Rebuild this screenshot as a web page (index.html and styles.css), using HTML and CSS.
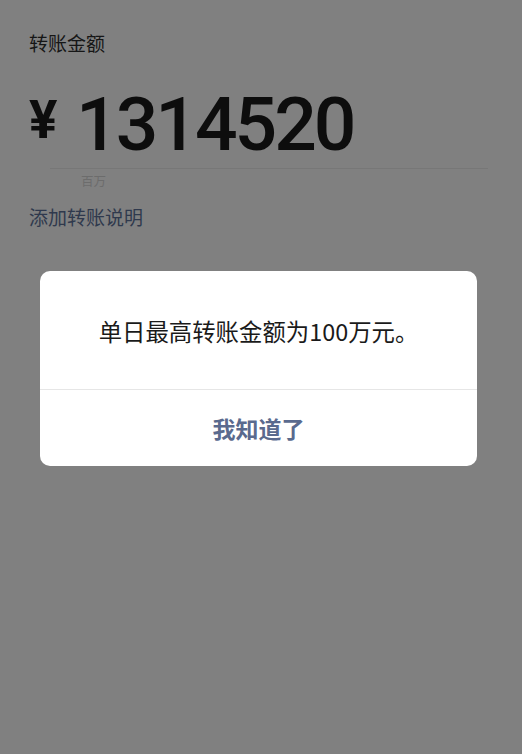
FILE: index.html
```html
<!DOCTYPE html>
<html lang="zh-CN">
<head>
<meta charset="utf-8">
<link rel="stylesheet" href="styles.css">
</head>
<body>
<div class="page">
  <div class="label">转账金额</div>
  <div class="amount-row">
    <span class="yen">¥</span>
    <span class="amount">1314520</span>
  </div>
  <div class="underline"></div>
  <div class="unit">百万</div>
  <div class="note">添加转账说明</div>
</div>
<div class="dialog">
  <div class="dialog-msg">单日最高转账金额为100万元。</div>
  <div class="dialog-btn">我知道了</div>
</div>
</body>
</html>
```
FILE: styles.css
```css
html, body {
  margin: 0;
  padding: 0;
}
body {
  width: 522px;
  height: 754px;
  background: #808080;
  font-family: "Noto Sans CJK SC", "Noto Sans", sans-serif;
  position: relative;
  overflow: hidden;
}
.page {
  padding: 32px 0 0 29px;
}
.label {
  font-size: 19px;
  line-height: 22px;
  color: #161616;
}
.amount-row {
  display: flex;
  align-items: flex-start;
  margin-top: 41px;
  height: 70px;
}
.yen {
  font-family: "Roboto", sans-serif;
  font-weight: 700;
  font-size: 53px;
  line-height: 53px;
  color: #0d0d0d;
  margin-top: -1px;
  width: 47px;
}
.amount {
  font-family: "Roboto", sans-serif;
  font-weight: 500;
  font-size: 75px;
  line-height: 75px;
  letter-spacing: -3px;
  color: #0d0d0d;
  margin-top: -8px;
}
.underline {
  height: 1px;
  background: #777777;
  margin: 3px 34px 0 21px;
}
.unit {
  font-size: 12.5px;
  line-height: 14px;
  color: #6c6c6c;
  margin: 5px 0 0 52px;
}
.note {
  font-size: 19px;
  line-height: 22px;
  color: #2f394d;
  margin-top: 18px;
}
.dialog {
  position: absolute;
  left: 40px;
  top: 271px;
  width: 437px;
  background: #ffffff;
  border-radius: 10px;
  overflow: hidden;
}
.dialog-msg {
  height: 119px;
  display: flex;
  align-items: center;
  justify-content: center;
  font-size: 23.4px;
  color: #1a1a1a;
  border-bottom: 1px solid #e6e6e6;
  box-sizing: border-box;
  padding-top: 1px;
}
.dialog-btn {
  height: 76px;
  display: flex;
  align-items: center;
  justify-content: center;
  font-size: 23px;
  font-weight: 700;
  color: #5a6a8e;
}
```
